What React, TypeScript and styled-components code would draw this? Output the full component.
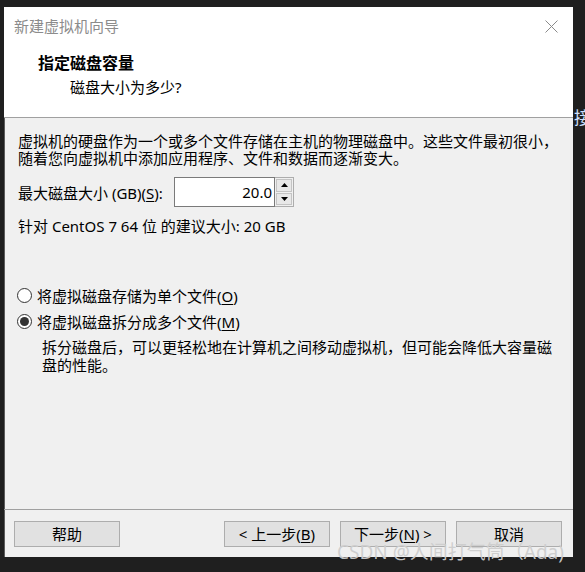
import React, { useState } from 'react';
import styled, { createGlobalStyle } from 'styled-components';

const GlobalStyle = createGlobalStyle`
    html, body {
        margin: 0;
        padding: 0;
        background: #1f1f1f;
    }
    body {
        font-family: "Noto Sans", "Noto Sans CJK SC", sans-serif;
        font-size: 15px;
        color: #000;
    }
`;

const Screen = styled.div`
    position: relative;
    width: 585px;
    height: 572px;
    overflow: hidden;
    background: #1f1f1f;
    display: flex;
    padding: 7px 0 0 4px;
    box-sizing: border-box;
`;

const SideText = styled.div`
    position: absolute;
    left: 574px;
    top: 104px;
    font-size: 17px;
    color: #cfe0ff;
`;

const Dialog = styled.div`
    width: 569px;
    height: 550px;
    display: flex;
    flex-direction: column;
    background: #f0f0f0;
    box-shadow: inset 1px 0 0 #5c5c5c;
`;

const Header = styled.div`
    height: 110px;
    background: #fff;
    border-bottom: 1px solid #a0a0a0;
    display: flex;
    flex-direction: column;
`;

const TitleRow = styled.div`
    display: flex;
    justify-content: space-between;
    align-items: center;
    height: 20px;
    margin-top: 9px;
    padding: 0 15px 0 10px;
`;

const TitleText = styled.span`
    color: #8c8c8c;
    line-height: 20px;
`;

const Heading = styled.div`
    font-weight: bold;
    font-size: 16px;
    line-height: 20px;
    margin: 17px 0 0 34px;
`;

const SubHeading = styled.div`
    line-height: 20px;
    margin: 4px 0 0 66px;
`;

const Body = styled.div`
    flex: 1;
    display: flex;
    flex-direction: column;
    padding: 15px 10px 0 14px;
`;

const Paragraph = styled.p<{ indent?: number }>`
    margin: 0;
    line-height: 17px;
    padding-left: ${p => p.indent || 0}px;
`;

const SizeRow = styled.div`
    display: flex;
    align-items: center;
    margin-top: 10px;
    height: 30px;
`;

const SizeLabel = styled.label`
    width: 156px;
`;

const SizeInput = styled.input`
    width: 101px;
    height: 30px;
    box-sizing: border-box;
    border: 1px solid #7a7a7a;
    background: #fff;
    text-align: right;
    font: inherit;
    padding: 0 2px 0 0;
    outline: none;
`;

const Spinner = styled.div`
    display: flex;
    flex-direction: column;
    width: 19px;
    height: 30px;
    box-sizing: border-box;
    border: 1px solid #adadad;
    border-left: none;
    background: #f0f0f0;
`;

const SpinButton = styled.button`
    flex: 1;
    display: flex;
    align-items: center;
    justify-content: center;
    padding: 0;
    margin: 1px 1px 0 1px;
    border: 1px solid #c4c4c4;
    background: #e8e8e8;
    &:last-child {
        margin-bottom: 1px;
    }
`;

const Recommend = styled.div`
    margin-top: 10px;
    line-height: 18px;
`;

const RadioGroup = styled.div`
    display: flex;
    flex-direction: column;
    margin-top: 51px;
    gap: 8px;
`;

const RadioRow = styled.label`
    display: flex;
    align-items: center;
    height: 18px;
    gap: 5px;
    margin-left: -1px;
`;

const RadioCircle = styled.span<{ checked: boolean }>`
    width: 15px;
    height: 15px;
    box-sizing: border-box;
    border-radius: 50%;
    border: 1px solid #333;
    background: #fff;
    display: flex;
    align-items: center;
    justify-content: center;
    &::after {
        content: '';
        width: 9px;
        height: 9px;
        border-radius: 50%;
        background: ${p => (p.checked ? '#333' : 'transparent')};
    }
`;

const Description = styled(Paragraph)`
    margin-top: 8px;
    line-height: 18px;
`;

const Footer = styled.div`
    border-top: 1px solid #a0a0a0;
    height: 36px;
    display: flex;
    align-items: flex-start;
    padding: 11px 11px 0 10px;
    gap: 10px;
`;

const Button = styled.button<{ pushRight?: boolean }>`
    width: 106px;
    height: 26px;
    box-sizing: border-box;
    border: 1px solid #adadad;
    background: #e1e1e1;
    font: inherit;
    color: #000;
    padding: 0;
    line-height: 24px;
    margin-left: ${p => (p.pushRight ? 'auto' : '0')};
`;

const Key = styled.span`
    text-decoration: underline;
    text-underline-offset: 2px;
`;

const Watermark = styled.div`
    position: absolute;
    left: 337px;
    top: 541px;
    font-size: 19px;
    line-height: 22px;
    color: rgba(205, 205, 205, 0.95);
    pointer-events: none;
`;

const CloseIcon = () => (
    <svg width="13" height="13" viewBox="0 0 13 13">
        <path d="M0.5 0.5 L12.5 12.5 M12.5 0.5 L0.5 12.5" stroke="#8a8a8a" strokeWidth="1" fill="none" />
    </svg>
);

const Arrow = ({ up }: { up: boolean }) => (
    <svg width="7" height="4" viewBox="0 0 7 4">
        <path d={up ? 'M3.5 0 L7 4 L0 4 Z' : 'M0 0 L7 0 L3.5 4 Z'} fill="#000" />
    </svg>
);

export default function App() {
    const [size, setSize] = useState('20.0');
    const [split, setSplit] = useState(true);

    const step = (delta: number) => {
        const next = Math.max(0, parseFloat(size || '0') + delta);
        setSize(next.toFixed(1));
    };

    return (
        <Screen>
            <GlobalStyle />
            <SideText>接</SideText>
            <Dialog>
                <Header>
                    <TitleRow>
                        <TitleText>新建虚拟机向导</TitleText>
                        <CloseIcon />
                    </TitleRow>
                    <Heading>指定磁盘容量</Heading>
                    <SubHeading>磁盘大小为多少?</SubHeading>
                </Header>
                <Body>
                    <Paragraph>
                        虚拟机的硬盘作为一个或多个文件存储在主机的物理磁盘中。这些文件最初很小，
                        <br />
                        随着您向虚拟机中添加应用程序、文件和数据而逐渐变大。
                    </Paragraph>
                    <SizeRow>
                        <SizeLabel htmlFor="disk-size">
                            最大磁盘大小 (GB)(<Key>S</Key>):
                        </SizeLabel>
                        <SizeInput id="disk-size" value={size} onChange={e => setSize(e.target.value)} />
                        <Spinner>
                            <SpinButton onClick={() => step(1)}><Arrow up /></SpinButton>
                            <SpinButton onClick={() => step(-1)}><Arrow up={false} /></SpinButton>
                        </Spinner>
                    </SizeRow>
                    <Recommend>针对 CentOS 7 64 位 的建议大小: 20 GB</Recommend>
                    <RadioGroup>
                        <RadioRow onClick={() => setSplit(false)}>
                            <RadioCircle checked={!split} />
                            <span>将虚拟磁盘存储为单个文件(<Key>O</Key>)</span>
                        </RadioRow>
                        <RadioRow onClick={() => setSplit(true)}>
                            <RadioCircle checked={split} />
                            <span>将虚拟磁盘拆分成多个文件(<Key>M</Key>)</span>
                        </RadioRow>
                    </RadioGroup>
                    <Description indent={24}>
                        拆分磁盘后，可以更轻松地在计算机之间移动虚拟机，但可能会降低大容量磁
                        <br />
                        盘的性能。
                    </Description>
                </Body>
                <Footer>
                    <Button>帮助</Button>
                    <Button pushRight>&lt; 上一步(<Key>B</Key>)</Button>
                    <Button>下一步(<Key>N</Key>) &gt;</Button>
                    <Button>取消</Button>
                </Footer>
            </Dialog>
            <Watermark>CSDN @人间打气筒（Ada)</Watermark>
        </Screen>
    );
}
